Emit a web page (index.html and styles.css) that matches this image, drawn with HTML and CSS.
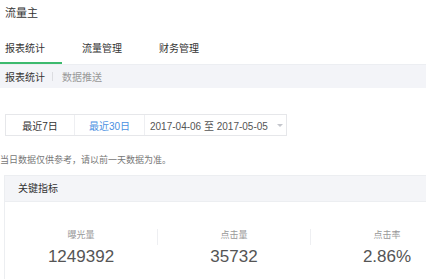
FILE: index.html
```html
<!DOCTYPE html>
<html lang="zh">
<head>
<meta charset="utf-8">
<link rel="stylesheet" href="styles.css">
</head>
<body>
<div class="page">
  <div class="title">流量主</div>
  <div class="tabs">
    <div class="tab active">报表统计</div>
    <div class="tab">流量管理</div>
    <div class="tab">财务管理</div>
  </div>
  <div class="subnav">
    <span class="sub active">报表统计</span>
    <span class="sep"></span>
    <span class="sub">数据推送</span>
  </div>
  <div class="range">
    <div class="cell c1">最近7日</div>
    <div class="cell c2 on">最近30日</div>
    <div class="cell date">2017-04-06 至 2017-05-05<span class="caret"></span></div>
  </div>
  <div class="note">当日数据仅供参考，请以前一天数据为准。</div>
  <div class="card">
    <div class="card-head">关键指标</div>
    <div class="card-body">
      <div class="stat">
        <div class="label">曝光量</div>
        <div class="num">1249392</div>
      </div>
      <div class="divider"></div>
      <div class="stat">
        <div class="label">点击量</div>
        <div class="num">35732</div>
      </div>
      <div class="divider"></div>
      <div class="stat">
        <div class="label">点击率</div>
        <div class="num">2.86%</div>
      </div>
    </div>
  </div>
</div>
</body>
</html>
```
FILE: styles.css
```css
html, body {
  margin: 0;
  padding: 0;
  background: #fff;
}
body {
  font-family: "Liberation Sans", "Noto Sans CJK SC", sans-serif;
  color: #333;
  width: 426px;
  height: 279px;
  overflow: hidden;
}
.page {
  width: 426px;
  overflow: hidden;
}
.title {
  height: 26px;
  line-height: 26px;
  padding-left: 5px;
  font-size: 11px;
  color: #333;
}
.tabs {
  display: flex;
  gap: 15px;
}
.tab {
  width: 57px;
  padding: 16px 0 6px 5px;
  line-height: 14px;
  font-size: 10px;
  color: #333;
  border-bottom: 2px solid transparent;
}
.tab.active {
  border-bottom-color: #3dba6e;
}
.subnav {
  height: 24px;
  background: #f3f4f8;
  border-top: 1px solid #eceef2;
  box-sizing: border-box;
  display: flex;
  align-items: center;
  padding-left: 5px;
  font-size: 10px;
}
.sub {
  color: #999;
}
.sub.active {
  color: #333;
}
.sep {
  width: 1px;
  height: 9px;
  background: #dcdde1;
  margin: 0 9px 0 7px;
}
.range {
  margin: 26px 0 0 5px;
  display: flex;
  width: 282px;
  height: 22px;
  border: 1px solid #e6e7ea;
  box-sizing: border-box;
  font-size: 10px;
}
.cell {
  display: flex;
  align-items: center;
  justify-content: center;
  border-right: 1px solid #eeeff2;
  color: #333;
}
.c1 { width: 68px; }
.c2 { width: 69px; }
.cell.on { color: #4a90e2; }
.cell.date {
  flex: 1;
  border-right: none;
  justify-content: flex-start;
  padding-left: 5px;
  color: #555;
}
.caret {
  margin-left: 9px;
  width: 0;
  height: 0;
  border-left: 3px solid transparent;
  border-right: 3px solid transparent;
  border-top: 3px solid #c4c6cc;
}
.note {
  margin-top: 18px;
  line-height: 12px;
  font-size: 9px;
  color: #777;
}
.card {
  margin: 9px 0 0 4px;
  border-left: 1px solid #eceef1;
  border-top: 1px solid #eceef1;
  overflow: hidden;
}
.card-head {
  height: 25px;
  line-height: 25px;
  background: #f4f5f8;
  border-bottom: 1px solid #eceef1;
  padding-left: 13px;
  font-size: 10px;
  color: #333;
}
.card-body {
  display: flex;
  padding-top: 27px;
  height: 60px;
  overflow: hidden;
}
.stat {
  width: 152px;
  flex: none;
  text-align: center;
}
.label {
  font-size: 9px;
  line-height: 12px;
  color: #999;
}
.num {
  margin-top: 6px;
  font-size: 17px;
  line-height: 20px;
  color: #555;
}
.divider {
  flex: none;
  width: 1px;
  height: 16px;
  background: #eeeff2;
}
```
